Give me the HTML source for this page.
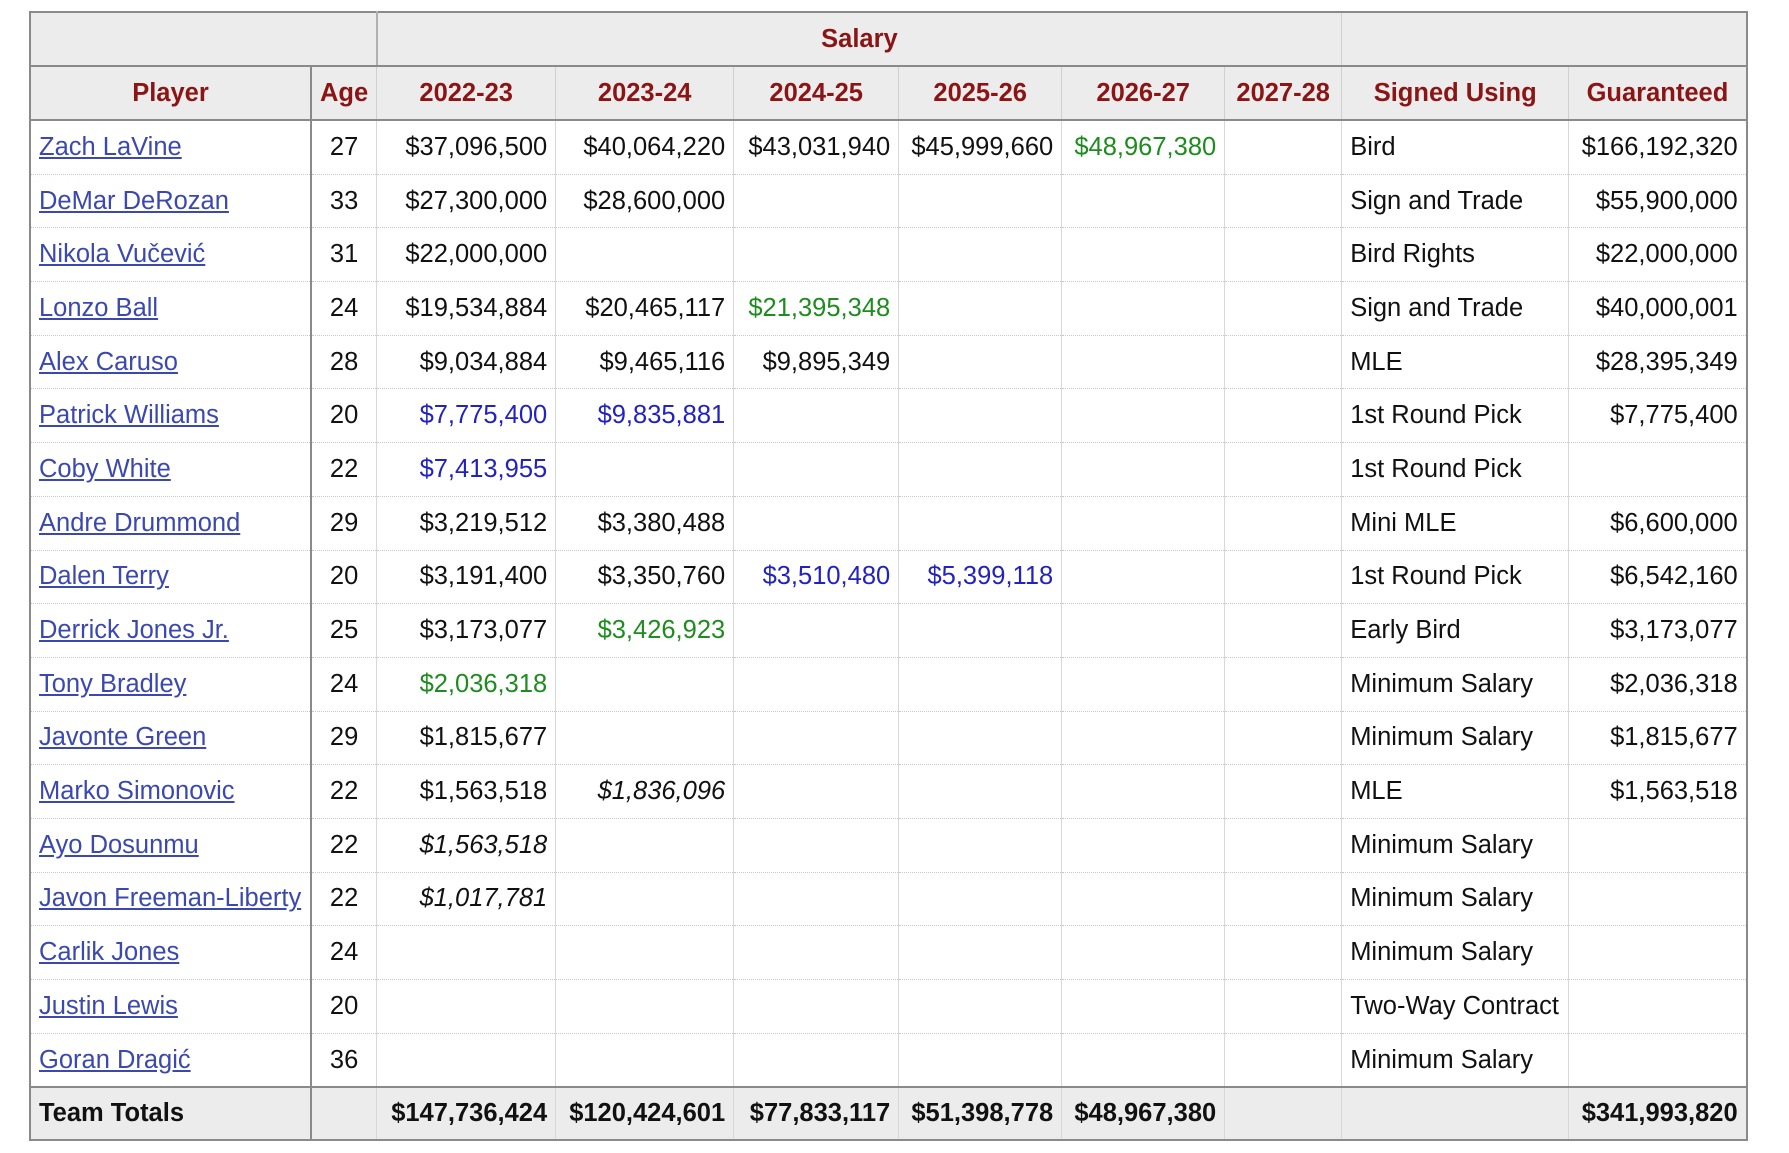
<!DOCTYPE html>
<html><head><meta charset="utf-8"><style>
html,body{margin:0;padding:0;background:#fff;width:1789px;height:1153px;overflow:hidden}
table{position:absolute;left:29px;top:11px;border-collapse:collapse;table-layout:fixed;font-family:"Liberation Sans",Arial,sans-serif;font-size:25.5px;color:#111}
td,th{padding:0 8px;white-space:nowrap;overflow:hidden;border-left:1px solid #d8d8d8;border-right:1px solid #d8d8d8;border-bottom:1px dotted #c8c8c8}
th{background:#ececec;color:#8b1515;font-weight:bold;text-align:center;border-bottom:2px solid #8a8a8a;border-top:0;border-color:#d0d0d0}
tr.h1 th{height:52px;border-bottom:2px solid #8a8a8a;border-top:2px solid #8a8a8a}
tr.h2 th{height:52px;border-bottom:2px solid #8a8a8a}
tbody td{height:52.7px}
td.r{text-align:right}
td.c{text-align:center}
td.p{border-right:2px solid #8a8a8a}
th.p{border-right:2px solid #8a8a8a}
td:first-child,th:first-child{border-left:2px solid #8a8a8a}
td:last-child,th:last-child{border-right:2px solid #8a8a8a}
a{color:#3a48b0;text-decoration:underline}
.g{color:#1e8c1e}.b{color:#2222c0}.i{font-style:italic}
tr.t td{background:#ececec;font-weight:bold;border-top:2px solid #8a8a8a;border-bottom:2px solid #8a8a8a;height:51px}
</style></head><body>
<table>
<colgroup><col style="width:281px"><col style="width:64px"><col style="width:179px"><col style="width:178px"><col style="width:165px"><col style="width:163px"><col style="width:163px"><col style="width:117px"><col style="width:227px"><col style="width:178px"></colgroup>
<thead>
<tr class="h1"><th colspan="2" style="border-right:2px solid #b0b0b0"></th><th colspan="6">Salary</th><th colspan="2"></th></tr>
<tr class="h2"><th class="p">Player</th><th>Age</th><th>2022-23</th><th>2023-24</th><th>2024-25</th><th>2025-26</th><th>2026-27</th><th>2027-28</th><th>Signed Using</th><th>Guaranteed</th></tr>
</thead>
<tbody>
<tr><td class="p"><a>Zach LaVine</a></td><td class="c">27</td><td class="r">$37,096,500</td><td class="r">$40,064,220</td><td class="r">$43,031,940</td><td class="r">$45,999,660</td><td class="r g">$48,967,380</td><td></td><td>Bird</td><td class="r">$166,192,320</td></tr>
<tr><td class="p"><a>DeMar DeRozan</a></td><td class="c">33</td><td class="r">$27,300,000</td><td class="r">$28,600,000</td><td></td><td></td><td></td><td></td><td>Sign and Trade</td><td class="r">$55,900,000</td></tr>
<tr><td class="p"><a>Nikola Vučević</a></td><td class="c">31</td><td class="r">$22,000,000</td><td></td><td></td><td></td><td></td><td></td><td>Bird Rights</td><td class="r">$22,000,000</td></tr>
<tr><td class="p"><a>Lonzo Ball</a></td><td class="c">24</td><td class="r">$19,534,884</td><td class="r">$20,465,117</td><td class="r g">$21,395,348</td><td></td><td></td><td></td><td>Sign and Trade</td><td class="r">$40,000,001</td></tr>
<tr><td class="p"><a>Alex Caruso</a></td><td class="c">28</td><td class="r">$9,034,884</td><td class="r">$9,465,116</td><td class="r">$9,895,349</td><td></td><td></td><td></td><td>MLE</td><td class="r">$28,395,349</td></tr>
<tr><td class="p"><a>Patrick Williams</a></td><td class="c">20</td><td class="r b">$7,775,400</td><td class="r b">$9,835,881</td><td></td><td></td><td></td><td></td><td>1st Round Pick</td><td class="r">$7,775,400</td></tr>
<tr><td class="p"><a>Coby White</a></td><td class="c">22</td><td class="r b">$7,413,955</td><td></td><td></td><td></td><td></td><td></td><td>1st Round Pick</td><td></td></tr>
<tr><td class="p"><a>Andre Drummond</a></td><td class="c">29</td><td class="r">$3,219,512</td><td class="r">$3,380,488</td><td></td><td></td><td></td><td></td><td>Mini MLE</td><td class="r">$6,600,000</td></tr>
<tr><td class="p"><a>Dalen Terry</a></td><td class="c">20</td><td class="r">$3,191,400</td><td class="r">$3,350,760</td><td class="r b">$3,510,480</td><td class="r b">$5,399,118</td><td></td><td></td><td>1st Round Pick</td><td class="r">$6,542,160</td></tr>
<tr><td class="p"><a>Derrick Jones Jr.</a></td><td class="c">25</td><td class="r">$3,173,077</td><td class="r g">$3,426,923</td><td></td><td></td><td></td><td></td><td>Early Bird</td><td class="r">$3,173,077</td></tr>
<tr><td class="p"><a>Tony Bradley</a></td><td class="c">24</td><td class="r g">$2,036,318</td><td></td><td></td><td></td><td></td><td></td><td>Minimum Salary</td><td class="r">$2,036,318</td></tr>
<tr><td class="p"><a>Javonte Green</a></td><td class="c">29</td><td class="r">$1,815,677</td><td></td><td></td><td></td><td></td><td></td><td>Minimum Salary</td><td class="r">$1,815,677</td></tr>
<tr><td class="p"><a>Marko Simonovic</a></td><td class="c">22</td><td class="r">$1,563,518</td><td class="r i">$1,836,096</td><td></td><td></td><td></td><td></td><td>MLE</td><td class="r">$1,563,518</td></tr>
<tr><td class="p"><a>Ayo Dosunmu</a></td><td class="c">22</td><td class="r i">$1,563,518</td><td></td><td></td><td></td><td></td><td></td><td>Minimum Salary</td><td></td></tr>
<tr><td class="p"><a>Javon Freeman-Liberty</a></td><td class="c">22</td><td class="r i">$1,017,781</td><td></td><td></td><td></td><td></td><td></td><td>Minimum Salary</td><td></td></tr>
<tr><td class="p"><a>Carlik Jones</a></td><td class="c">24</td><td></td><td></td><td></td><td></td><td></td><td></td><td>Minimum Salary</td><td></td></tr>
<tr><td class="p"><a>Justin Lewis</a></td><td class="c">20</td><td></td><td></td><td></td><td></td><td></td><td></td><td>Two-Way Contract</td><td></td></tr>
<tr><td class="p"><a>Goran Dragić</a></td><td class="c">36</td><td></td><td></td><td></td><td></td><td></td><td></td><td>Minimum Salary</td><td></td></tr>
<tr class="t"><td class="p">Team Totals</td><td></td><td class="r">$147,736,424</td><td class="r">$120,424,601</td><td class="r">$77,833,117</td><td class="r">$51,398,778</td><td class="r">$48,967,380</td><td></td><td></td><td class="r">$341,993,820</td></tr>
</tbody>
</table>
</body></html>
